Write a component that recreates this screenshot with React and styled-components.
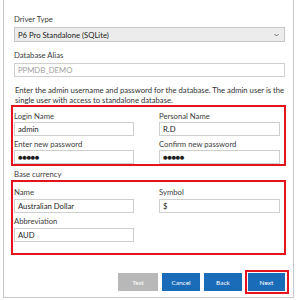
import React from 'react';
import styled, { createGlobalStyle } from 'styled-components';

const GlobalStyle = createGlobalStyle`
    html, body {
        margin: 0;
        padding: 0;
        background: #FFF;
    }
    body {
        font-family: Lato, "Open Sans", sans-serif;
        font-size: 7.7px;
        color: #333;
    }
`;

const Frame = styled.div`
    margin-left: 3px;
    width: 291px;
    height: 298px;
    border: 1px solid #c9c9c9;
    border-top: none;
    display: flex;
    flex-direction: column;
    padding: 14px 8px 0 10px;
    box-sizing: border-box;
`;

const Label = styled.div`
    line-height: 10px;
    height: 10px;
    margin: ${p => p.$mt || 0}px 0 ${p => p.$mb || 2}px 0;
    color: #3c3c3c;
    white-space: nowrap;
`;

const Select = styled.div`
    height: 13px;
    border: 1px solid #c6c6c6;
    background: #ececec;
    display: flex;
    align-items: center;
    justify-content: space-between;
    padding: 0 5px 0 3px;
    color: #222;
`;

const Chevron = styled.svg`
    width: 5px;
    height: 4px;
`;

const Input = styled.div`
    height: 12px;
    border: 1px solid #cfcfcf;
    background: #FFF;
    display: flex;
    align-items: center;
    padding: 0 3px;
    color: ${p => (p.$disabled ? '#a0a0a0' : '#1e1e1e')};
    font-size: ${p => (p.$dots ? '8px' : '7.7px')};
    letter-spacing: ${p => (p.$dots ? '-0.6px' : '0')};
`;

const Paragraph = styled.p`
    margin: 8px 0 0 1px;
    line-height: 10px;
    color: #333;
`;

const RedBox = styled.div`
    margin: ${p => p.$mt}px -1px 0 -3px;
    border: 2px solid #e5131b;
    display: grid;
    grid-template-columns: 120px 121px;
    column-gap: 25px;
    padding: 4px 3px 3px 1px;
    height: ${p => p.$h}px;
    box-sizing: border-box;
    align-content: start;
`;

const Field = styled.div`
    display: flex;
    flex-direction: column;
`;

const Section = styled.div`
    color: #3c3c3c;
    margin: 3px 0 0 0;
    line-height: 10px;
`;

const ButtonRow = styled.div`
    margin-top: auto;
    margin-bottom: 3px;
    display: flex;
    justify-content: flex-end;
    align-items: center;
    gap: 4px;
`;

const Button = styled.div`
    width: ${p => p.$w || 38}px;
    height: 18px;
    display: flex;
    align-items: center;
    justify-content: center;
    color: #FFF;
    font-size: 6.5px;
    background: ${p => (p.$disabled ? '#b8b8b8' : '#1a6cb8')};
`;

const Highlight = styled.div`
    border: 2px solid #e5131b;
    padding: 1px 2px 1px 1px;
    margin-right: -4px;
    margin-left: -1px;
`;

const Dots = () => <span>●●●●●</span>;

export default function App() {
    return (
        <>
            <GlobalStyle />
            <Frame>
                <Label $mb={3}>Driver Type</Label>
                <Select>
                    <span>P6 Pro Standalone (SQLite)</span>
                    <Chevron viewBox="0 0 5 4">
                        <path d="M0.5 1 L2.5 3 L4.5 1" fill="none" stroke="#666" strokeWidth="0.9" />
                    </Chevron>
                </Select>
                <Label $mt={8} $mb={3}>Database Alias</Label>
                <Input $disabled>PPMDB_DEMO</Input>
                <Paragraph>
                    Enter the admin username and password for the database. The admin user is the
                    single user with access to standalone database.
                </Paragraph>
                <RedBox $mt={0} $h={61}>
                    <Field>
                        <Label $mb={1}>Login Name</Label>
                        <Input>admin</Input>
                    </Field>
                    <Field>
                        <Label $mb={1}>Personal Name</Label>
                        <Input>R.D</Input>
                    </Field>
                    <Field>
                        <Label $mt={3} $mb={1}>Enter new password</Label>
                        <Input $dots><Dots /></Input>
                    </Field>
                    <Field>
                        <Label $mt={3} $mb={1}>Confirm new password</Label>
                        <Input $dots><Dots /></Input>
                    </Field>
                </RedBox>
                <Section>Base currency</Section>
                <RedBox $mt={1} $h={75}>
                    <Field>
                        <Label $mt={1} $mb={2}>Name</Label>
                        <Input>Australian Dollar</Input>
                    </Field>
                    <Field>
                        <Label $mt={1} $mb={2}>Symbol</Label>
                        <Input>$</Input>
                    </Field>
                    <Field>
                        <Label $mt={3} $mb={2}>Abbreviation</Label>
                        <Input>AUD</Input>
                    </Field>
                </RedBox>
                <ButtonRow>
                    <Button $disabled $w={40}>Test</Button>
                    <Button>Cancel</Button>
                    <Button>Back</Button>
                    <Highlight>
                        <Button $w={37}>Next</Button>
                    </Highlight>
                </ButtonRow>
            </Frame>
        </>
    );
}
